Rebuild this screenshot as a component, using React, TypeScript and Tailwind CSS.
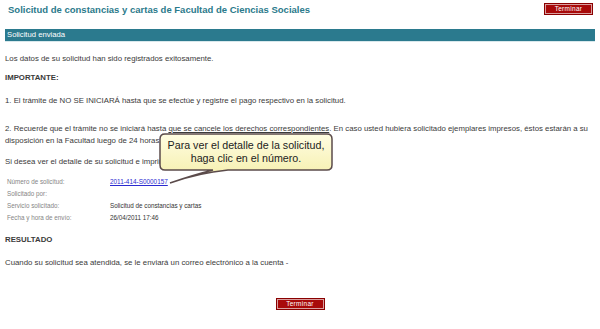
const TerminarButton = () => (
  <button className="w-[47px] h-[10px] bg-[#a80a0a] border border-[#d9a0a0] outline outline-1 outline-[#8a0000] text-white text-[6.5px] leading-[8px] tracking-[0.3px] flex items-center justify-center">
    Terminar
  </button>
);

const Callout = () => (
  <div className="absolute left-[158px] top-[131px] w-[178px] h-[56px]">
    <svg width="178" height="56" viewBox="0 0 178 56" className="absolute inset-0">
      <defs>
        <linearGradient id="tipFill" x1="0" y1="0" x2="0" y2="1">
          <stop offset="0" stopColor="#fffde2" />
          <stop offset="1" stopColor="#f4eda6" />
        </linearGradient>
      </defs>
      <path
        d="M7,3 H169 Q174,3 174,8 V34 Q174,39 169,39 H70 Q40,42 12,52 Q35,44 55,39 H7 Q2,39 2,34 V8 Q2,3 7,3 Z"
        fill="url(#tipFill)"
        stroke="#5b4b4b"
        strokeWidth="1.5"
      />
    </svg>
    <div className="absolute left-[2px] top-[3px] w-[172px] h-[36px] flex flex-col items-center justify-center text-[10.7px] leading-[13px] text-[#222]">
      <span>Para ver el detalle de la solicitud,</span>
      <span>haga clic en el número.</span>
    </div>
  </div>
);

const details = [
  { label: "Número de solicitud:", value: "2011-414-S0000157", link: true },
  { label: "Solicitado por:", value: "" },
  { label: "Servicio solicitado:", value: "Solicitud de constancias y cartas" },
  { label: "Fecha y hora de envío:", value: "26/04/2011 17:46" },
];

export default function App() {
  return (
    <div className="relative w-[600px] h-[329px] bg-white overflow-hidden font-['Liberation_Sans',Arial,sans-serif] text-[#3a3a3a]">
      {/* Header */}
      <div className="h-[29px] flex items-start justify-between pl-[8px] pr-[8px] pt-[4px]">
        <h1 className="text-[9.5px] leading-[11px] font-bold text-[#2b7a8b]">
          Solicitud de constancias y cartas de Facultad de Ciencias Sociales
        </h1>
        <TerminarButton />
      </div>

      {/* Section bar */}
      <div className="mx-[5px] h-[13px] bg-[#2b7a8e] border-b border-[#d8e8ec] text-white text-[7.7px] leading-[12px] pl-[2px]">
        Solicitud enviada
      </div>

      <div className="px-[5px] text-[7.8px] leading-[10px]">
        <p className="mt-[12px]">Los datos de su solicitud han sido registrados exitosamente.</p>
        <p className="mt-[9px] font-bold">IMPORTANTE:</p>
        <p className="mt-[13px]">
          1. El trámite de NO SE INICIARÁ hasta que se efectúe y registre el pago respectivo en la solicitud.
        </p>
        <p className="mt-[17px] leading-[12px] whitespace-nowrap">
          2. Recuerde que el trámite no se iniciará hasta <span className="underline">que se cancele los derechos correspondientes</span>. En caso usted hubiera solicitado ejemplares impresos, éstos estarán a su
          <br />
          disposición en la Facultad luego de 24 horas.
        </p>
        <p className="mt-[10px]">
          Si desea ver el detalle de su solicitud e imprimirla, haga clic en el número de solicitud.
        </p>

        <div className="mt-[9px] pl-[2px] grid grid-cols-[103px_1fr] text-[6.3px] leading-[12px]">
          {details.map((d) => (
            <div key={d.label} className="contents">
              <span className="text-[#858585]">{d.label}</span>
              {d.link ? (
                <a href="#" className="text-[#2a2ad0] underline text-[6.4px]">
                  {d.value}
                </a>
              ) : (
                <span className="text-[#333]">{d.value}</span>
              )}
            </div>
          ))}
        </div>

        <p className="mt-[11px] font-bold">RESULTADO</p>
        <p className="mt-[13px]">
          Cuando su solicitud sea atendida, se le enviará un correo electrónico a la cuenta -
        </p>

        <div className="mt-[31px] flex justify-center">
          <TerminarButton />
        </div>
      </div>

      <Callout />
    </div>
  );
}
